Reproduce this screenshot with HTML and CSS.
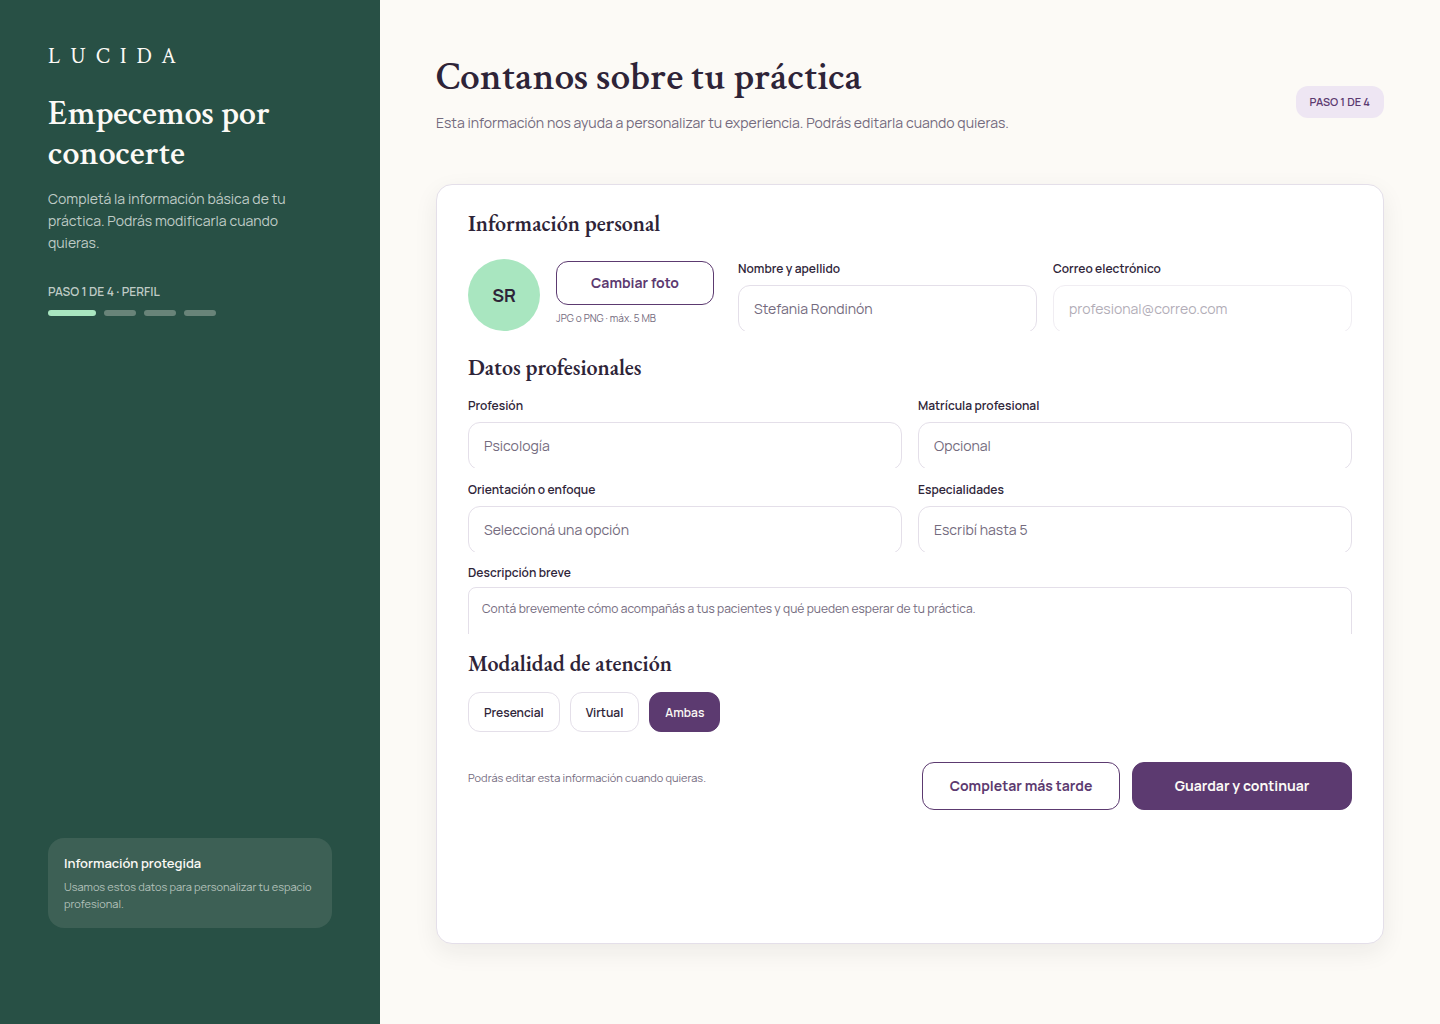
FILE: index.html
```html
<!DOCTYPE html>
<html lang="es">
<head>
  <meta charset="UTF-8" />
  <meta name="viewport" content="width=device-width, initial-scale=1.0"/>
  <title>Lucida - Perfil</title>
  <link rel="stylesheet" href="styles.css">
</head>
<body>
  <div class="layout">
    <!-- Panel lateral -->
    <aside class="sidebar">
      <div class="logo">LUCIDA</div>
      <h2 class="sidebar-title">Empecemos por conocerte</h2>
      <p class="sidebar-text">Completá la información básica de tu práctica. Podrás modificarla cuando quieras.</p>

      <p class="step-label">PASO 1 DE 4 · PERFIL</p>
      <div class="steps">
        <span class="step active"></span>
        <span class="step"></span>
        <span class="step"></span>
        <span class="step"></span>
      </div>

      <div class="notice">
        <h3 class="notice-title">Información protegida</h3>
        <p class="notice-text">Usamos estos datos para personalizar tu espacio profesional.</p>
      </div>
    </aside>

    <main class="content">
      <header class="header">
        <div>
          <h1 class="title">Contanos sobre tu práctica</h1>
          <p class="subtitle">Esta información nos ayuda a personalizar tu experiencia. Podrás editarla cuando quieras.</p>
        </div>
        <span class="badge">PASO 1 DE 4</span>
      </header>

      <form class="card">
        <!-- Información personal -->
        <section class="section personal">
          <h2 class="section-title">Información personal</h2>
          <div class="personal-row">
            <div class="avatar">SR</div>
            <div class="photo">
              <button type="button" class="btn btn-outline btn-photo">Cambiar foto</button>
              <span class="hint">JPG o PNG · máx. 5 MB</span>
            </div>
            <div class="field">
              <label for="nombre">Nombre y apellido</label>
              <input type="text" id="nombre" placeholder="Stefania Rondinón">
            </div>
            <div class="field">
              <label for="correo">Correo electrónico</label>
              <input type="email" id="correo" placeholder="profesional@correo.com" disabled>
            </div>
          </div>
        </section>

        <!-- Datos profesionales -->
        <section class="section">
          <h2 class="section-title">Datos profesionales</h2>
          <div class="grid">
            <div class="field">
              <label for="profesion">Profesión</label>
              <input type="text" id="profesion" placeholder="Psicología">
            </div>
            <div class="field">
              <label for="matricula">Matrícula profesional</label>
              <input type="text" id="matricula" placeholder="Opcional">
            </div>
            <div class="field">
              <label for="enfoque">Orientación o enfoque</label>
              <select id="enfoque">
                <option>Seleccioná una opción</option>
              </select>
            </div>
            <div class="field">
              <label for="especialidades">Especialidades</label>
              <input type="text" id="especialidades" placeholder="Escribí hasta 5">
            </div>
            <div class="field field-wide">
              <label for="descripcion">Descripción breve</label>
              <textarea id="descripcion" placeholder="Contá brevemente cómo acompañás a tus pacientes y qué pueden esperar de tu práctica."></textarea>
            </div>
          </div>
        </section>

        <!-- Modalidad -->
        <section class="section modality">
          <h2 class="section-title">Modalidad de atención</h2>
          <div class="chips">
            <label class="chip"><input type="radio" name="modalidad">Presencial</label>
            <label class="chip"><input type="radio" name="modalidad">Virtual</label>
            <label class="chip"><input type="radio" name="modalidad" checked>Ambas</label>
          </div>
        </section>

        <div class="actions">
          <p class="actions-text">Podrás editar esta información cuando quieras.</p>
          <button type="button" class="btn btn-outline btn-later">Completar más tarde</button>
          <button type="submit" class="btn btn-primary">Guardar y continuar</button>
        </div>
      </form>
    </main>
  </div>
</body>
</html>
```
FILE: styles.css
```css
* {
  box-sizing: border-box;
  margin: 0;
}

body {
  background-color: #fcfaf6;
  color: #2e2438;
  font-family: Manrope, Inter, sans-serif;
  font-size: 14px;
}

.layout {
  display: flex;
  min-height: 100vh;
}

/* Panel lateral */
.sidebar {
  display: flex;
  flex-direction: column;
  flex: 0 0 380px;
  padding: 44px 48px 96px;
  background-color: #285045;
  color: #fcfaf6;
}

.logo {
  margin-bottom: 24px;
  font-family: "Crimson Text", "Liberation Serif", serif;
  font-size: 22px;
  line-height: 26px;
  letter-spacing: 10px;
}

.sidebar-title {
  margin-bottom: 14px;
  font-family: "Crimson Text", "Liberation Serif", serif;
  font-size: 34px;
  font-weight: 600;
  line-height: 40px;
}

.sidebar-text {
  margin-bottom: 28px;
  color: #bfcbc5;
  line-height: 22px;
}

.step-label {
  margin-bottom: 8px;
  color: #bfcbc5;
  font-size: 12px;
  font-weight: 600;
  line-height: 20px;
}

.steps {
  display: flex;
  gap: 8px;
}

.step {
  width: 32px;
  height: 6px;
  border-radius: 3px;
  background-color: #698479;
}

.step.active {
  width: 48px;
  background-color: #a9e6c0;
}

.notice {
  margin-top: auto;
  padding: 16px;
  border-radius: 16px;
  background-color: #3d6055;
}

.notice-title {
  margin-bottom: 6px;
  font-size: 13px;
  font-weight: 600;
  line-height: 18px;
}

.notice-text {
  color: #b3c1ba;
  font-size: 11px;
  line-height: 17px;
}

/* Contenido */
.content {
  display: flex;
  flex-direction: column;
  flex: 1;
  padding: 56px 56px 80px;
}

.header {
  display: flex;
  justify-content: space-between;
  min-height: 92px;
  margin-bottom: 36px;
}

.title {
  margin-bottom: 12px;
  font-family: "Crimson Text", "Liberation Serif", serif;
  font-size: 39px;
  font-weight: 600;
  line-height: 44px;
}

.subtitle {
  color: #746b7e;
  line-height: 22px;
}

.badge {
  align-self: center;
  padding: 0 14px;
  border-radius: 12px;
  background-color: #eee6f3;
  color: #5c3a70;
  font-size: 11px;
  font-weight: 600;
  line-height: 32px;
}

.card {
  flex: 1;
  padding: 23px 31px;
  border: 1px solid #e4dfe9;
  border-radius: 16px;
  background-color: #fff;
  box-shadow: 0 8px 24px rgba(30, 25, 35, 0.07);
}

.section {
  display: flex;
  flex-direction: column;
  gap: 12px;
  margin-bottom: 14px;
}

.section.personal {
  gap: 19px;
  margin-bottom: 21px;
}

.section.modality {
  margin-bottom: 30px;
}

.section-title {
  font-family: "EB Garamond", "Liberation Serif", serif;
  font-size: 22px;
  font-weight: 600;
  line-height: 32px;
}

.personal-row {
  display: flex;
  align-items: center;
  gap: 16px;
}

.personal-row .field {
  flex: 1;
}

.avatar {
  width: 72px;
  border-radius: 50%;
  background-color: #a9e6c0;
  font-size: 18px;
  font-weight: 700;
  line-height: 72px;
  text-align: center;
}

.photo {
  display: flex;
  flex-direction: column;
  gap: 4px;
  margin-right: 8px;
}

.hint {
  padding-bottom: 2px;
  color: #746b7e;
  font-size: 10px;
  line-height: 18px;
}

/* Campos */
.grid {
  display: grid;
  grid-template-columns: 1fr 1fr;
  gap: 12px 16px;
}

.field {
  display: flex;
  flex-direction: column;
  gap: 6px;
  height: 72px;
  min-width: 0;
  overflow: hidden;
}

.field label {
  font-size: 12px;
  font-weight: 600;
  line-height: 20px;
}

.field input,
.field select,
.field textarea {
  flex-shrink: 0;
  width: 100%;
  height: 48px;
  padding: 0 15px 2px;
  border: 1px solid #e4dfe9;
  border-radius: 12px;
  background-color: #fff;
  color: #746b7e;
  font-family: inherit;
  font-size: 14px;
  appearance: none;
}

.field input::placeholder,
.field textarea::placeholder {
  color: #746b7e;
}

.field input:disabled {
  opacity: 0.55;
}

.field-wide {
  grid-column: 1 / -1;
  gap: 5px;
  height: 70px;
}

.field-wide label {
  line-height: 18px;
}

.field textarea {
  height: 88px;
  padding: 12px 13px;
  border-radius: 8px;
  font-size: 12px;
  line-height: 18px;
  resize: none;
}

/* Modalidad */
.chips {
  display: flex;
  gap: 10px;
}

.chip {
  padding: 1px 15px 0;
  border: 1px solid #e4dfe9;
  border-radius: 12px;
  font-size: 12px;
  font-weight: 600;
  line-height: 37px;
  cursor: pointer;
}

.chip input {
  position: absolute;
  opacity: 0;
}

.chip:has(input:checked) {
  border-color: #5c3a70;
  background-color: #5c3a70;
  color: #fcfaf6;
}

/* Botones */
.actions {
  display: flex;
  gap: 12px;
}

.actions-text {
  flex: 1;
  color: #746b7e;
  font-size: 11px;
  line-height: 32px;
}

.btn {
  height: 48px;
  padding: 0 16px 2px;
  border: 1px solid #5c3a70;
  border-radius: 12px;
  font-family: inherit;
  font-size: 14px;
  font-weight: 700;
  cursor: pointer;
}

.btn-outline {
  background-color: #fff;
  color: #5c3a70;
}

.btn-primary {
  min-width: 220px;
  background-color: #5c3a70;
  color: #fcfaf6;
}

.btn-later {
  min-width: 198px;
}

.btn-photo {
  width: 158px;
  height: 44px;
}
```
